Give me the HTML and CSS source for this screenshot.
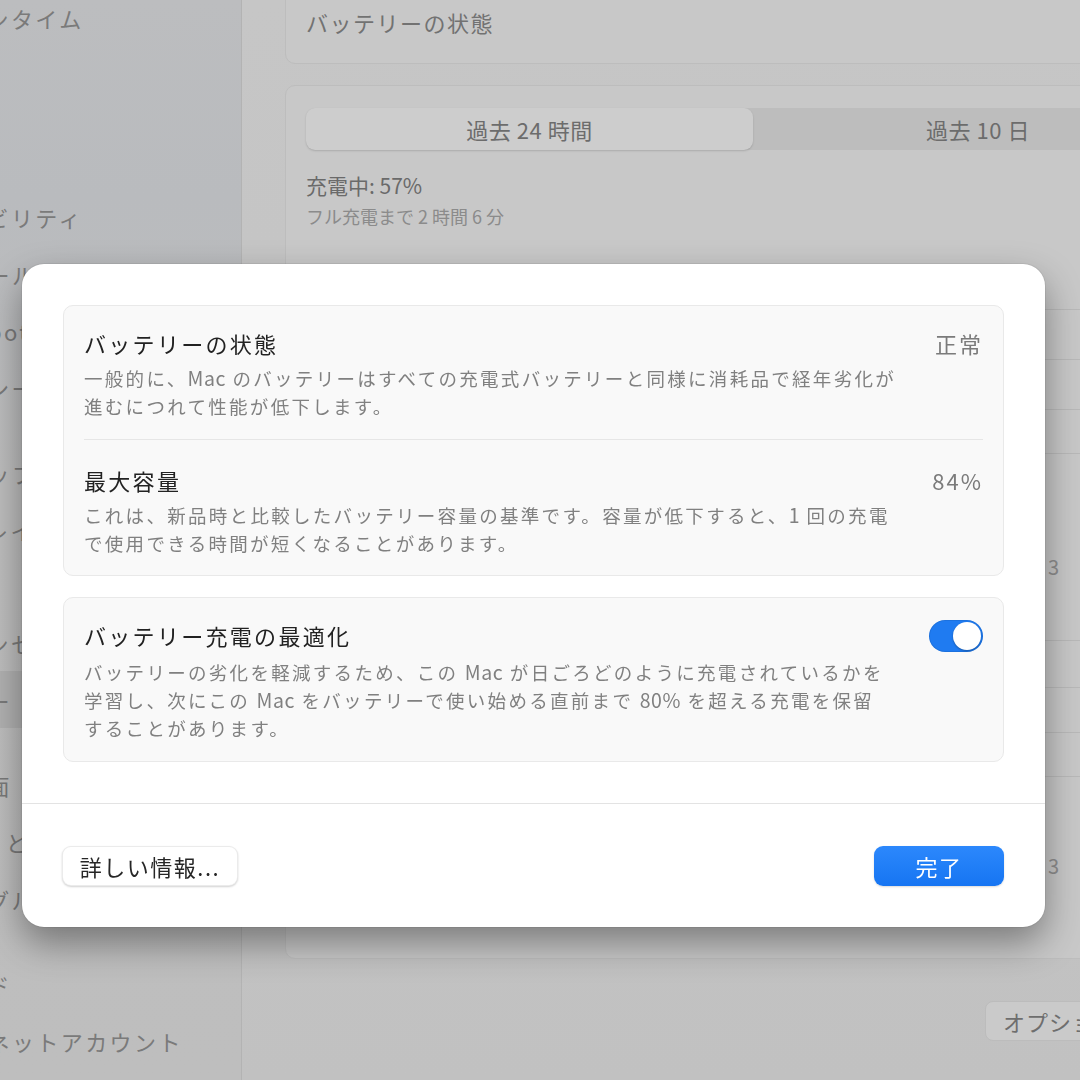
FILE: index.html
```html
<!DOCTYPE html>
<html lang="ja">
<head>
<meta charset="utf-8">
<title>バッテリー</title>
<link rel="stylesheet" href="styles.css">
</head>
<body>
<div class="app">
  <aside class="sidebar">
    <div class="side-list">
      <div class="group first">
        <div class="item">スクリーンタイム</div>
      </div>
      <div class="group">
        <div class="item">一般</div>
        <div class="item">外観</div>
        <div class="item">アクセシビリティ</div>
        <div class="item">コントロールセンター</div>
        <div class="item">Siri と Spotlight</div>
        <div class="item">プライバシーとセキュリティ</div>
      </div>
      <div class="group">
        <div class="item">デスクトップとDock</div>
        <div class="item">ディスプレイ</div>
        <div class="item">壁紙</div>
        <div class="item">スクリーンセーバ</div>
        <div class="item selected">バッテリー</div>
      </div>
      <div class="group">
        <div class="item">ロック画面</div>
        <div class="item">Touch ID とパスワード</div>
        <div class="item">ユーザとグループ</div>
      </div>
      <div class="group">
        <div class="item">パスワード</div>
        <div class="item">インターネットアカウント</div>
      </div>
    </div>
  </aside>
  <main class="content">
    <section class="bg-card top-card">
      <div class="bg-title">バッテリーの状態</div>
    </section>
    <section class="bg-card main-card">
      <div class="segmented">
        <div class="seg active">過去 24 時間</div>
        <div class="seg">過去 10 日</div>
      </div>
      <div class="status">充電中: 57%</div>
      <div class="status-sub">フル充電まで 2 時間 6 分</div>
      <div class="chart chart-one">
        <div class="gl gl-50"></div>
        <div class="gl gl-50"></div>
        <div class="gl gl-44"></div>
        <div class="gl gl-end"></div>
      </div>
      <div class="axis-label label-one">3</div>
      <div class="chart chart-two">
        <div class="gl gl-47"></div>
        <div class="gl gl-45"></div>
        <div class="gl gl-44"></div>
        <div class="gl gl-end"></div>
      </div>
      <div class="axis-label label-two">3</div>
    </section>
    <div class="options-row">
      <div class="bg-button">オプション...</div>
    </div>
  </main>
</div>

<div class="overlay">
  <div class="modal">
    <div class="modal-body">
      <div class="group-box">
        <div class="row">
          <div class="row-head">
            <div class="row-title">バッテリーの状態</div>
            <div class="row-value">正常</div>
          </div>
          <div class="row-desc">一般的に、<span class="latin">Mac</span> のバッテリーはすべての充電式バッテリーと同様に消耗品で経年劣化が<br>進むにつれて性能が低下します。</div>
        </div>
        <div class="divider"></div>
        <div class="row second">
          <div class="row-head">
            <div class="row-title">最大容量</div>
            <div class="row-value">84%</div>
          </div>
          <div class="row-desc">これは、新品時と比較したバッテリー容量の基準です。容量が低下すると、<span class="latin">1</span> 回の充電<br>で使用できる時間が短くなることがあります。</div>
        </div>
      </div>
      <div class="group-box">
        <div class="row">
          <div class="row-head">
            <div class="row-title">バッテリー充電の最適化</div>
            <div class="toggle on"><div class="knob"></div></div>
          </div>
          <div class="row-desc">バッテリーの劣化を軽減するため、この <span class="latin">Mac</span> が日ごろどのように充電されているかを<br>学習し、次にこの <span class="latin">Mac</span> をバッテリーで使い始める直前まで <span class="latin">80%</span> を超える充電を保留<br>することがあります。</div>
        </div>
      </div>
    </div>
    <div class="modal-footer">
      <button class="btn btn-secondary">詳しい情報...</button>
      <button class="btn btn-primary">完了</button>
    </div>
  </div>
</div>
</body>
</html>
```

FILE: styles.css
```css
* { box-sizing: border-box; }

html, body {
  margin: 0;
  padding: 0;
  width: 1080px;
  height: 1080px;
  overflow: hidden;
  background: #c4c4c4;
  font-family: "Noto Sans CJK JP", "Noto Sans", sans-serif;
}

.app {
  display: flex;
  width: 1300px;
  height: 1080px;
}

/* ---------- Sidebar (background) ---------- */
.sidebar {
  width: 242px;
  flex: none;
  height: 1080px;
  overflow: hidden;
  background: linear-gradient(180deg, #bcbdbf 0%, #b9bbbe 18%, #bdbdbd 45%, #bebebe 100%);
  border-right: 1px solid #b3b3b3;
}

.side-list {
  margin-left: -110px;
  width: 360px;
}

.group { margin-top: 29px; }
.group.first { margin-top: -10px; }

.item {
  height: 56.67px;
  display: flex;
  align-items: center;
  font-size: 22px;
  letter-spacing: 2.4px;
  color: #7a7a7a;
  white-space: nowrap;
  border-radius: 8px;
}

.item.selected {
  background: #b1b1b1;
}

/* ---------- Content (background) ---------- */
.content {
  flex: none;
  width: 1058px;
  padding-left: 43px;
  background: linear-gradient(180deg, #c6c6c6 0%, #c3c3c3 70%, #c1c1c1 100%);
}

.bg-card {
  width: 940px;
  background: #c8c8c8;
  border: 1px solid #bdbdbd;
  border-radius: 10px;
}

.top-card {
  margin-top: -20px;
  height: 84px;
  padding: 26px 20px 0;
}

.bg-title {
  font-size: 22px;
  letter-spacing: 1.5px;
  color: #727272;
  line-height: 30px;
}

.main-card {
  margin-top: 21px;
  height: 874px;
  padding: 22px 20px 0;
}

.segmented {
  display: flex;
  width: 897px;
  height: 42px;
  background: #bdbdbd;
  border-radius: 9px;
}

.seg {
  flex: 1;
  display: flex;
  align-items: center;
  justify-content: center;
  font-size: 22px;
  color: #6c6c6c;
  letter-spacing: 0.5px;
}

.seg.active {
  flex: none;
  width: 447px;
  background: #cdcdcd;
  border-radius: 9px;
  box-shadow: 0 1px 2px rgba(0, 0, 0, 0.15);
}

.status {
  margin-top: 20px;
  font-size: 21px;
  line-height: 30px;
  color: #6a6a6a;
}

.status-sub {
  margin-top: 3px;
  font-size: 18px;
  line-height: 26px;
  color: #8b8b8b;
}

.chart { width: 897px; }
.chart-one { margin-top: 80px; }
.chart-two { margin-top: 60px; }

.gl { border-top: 1px solid #b9b9b9; }
.gl-50 { height: 50px; }
.gl-47 { height: 47px; }
.gl-45 { height: 45px; }
.gl-44 { height: 44px; }
.gl-end { height: 0; }

.axis-label {
  margin-left: 742px;
  font-size: 20px;
  line-height: 26px;
  color: #8e8e8e;
}
.label-one { margin-top: 100px; }
.label-two { margin-top: 76px; }

.options-row {
  margin-top: 42px;
  padding-left: 700px;
}

.bg-button {
  display: inline-flex;
  align-items: center;
  height: 40px;
  padding: 0 17px;
  background: #cacaca;
  border: 1px solid #bcbcbc;
  border-radius: 8px;
  font-size: 22px;
  letter-spacing: 1px;
  color: #6e6e6e;
  white-space: nowrap;
}

/* ---------- Modal ---------- */
.overlay {
  position: fixed;
  left: 0;
  top: 0;
  width: 1080px;
  height: 1080px;
}

.modal {
  position: absolute;
  left: 22px;
  top: 264px;
  width: 1023px;
  height: 663px;
  background: #ffffff;
  border-radius: 22px;
  box-shadow: 0 0 0 1px rgba(0, 0, 0, 0.06), 0 16px 36px rgba(0, 0, 0, 0.38);
  display: flex;
  flex-direction: column;
}

.modal-body {
  padding: 41px 41px 41px;
  display: flex;
  flex-direction: column;
  gap: 21px;
}

.group-box {
  background: #f9f9f9;
  border: 1px solid #e9e9e9;
  border-radius: 10px;
  padding: 0 20px;
}

.row { padding: 22px 0 19px; }
.row.second { padding: 25px 0 18px; }

.row-head {
  display: flex;
  justify-content: space-between;
  align-items: flex-start;
}

.row-title {
  font-size: 22px;
  line-height: 30px;
  letter-spacing: 2.3px;
  color: #222222;
}

.row-value {
  font-size: 22px;
  line-height: 30px;
  letter-spacing: 2px;
  color: #7b7b7b;
}

.row-desc {
  margin-top: 6px;
  font-size: 18.5px;
  line-height: 28px;
  letter-spacing: 2.3px;
  color: #808080;
  white-space: nowrap;
}

.latin {
  letter-spacing: 0.6px;
  font-size: 19.5px;
}

.divider {
  height: 1px;
  background: #e6e6e6;
}

.toggle {
  width: 54px;
  height: 32px;
  border-radius: 16px;
  background: #1f7bf1;
  padding: 2px;
  display: flex;
  justify-content: flex-end;
  box-shadow: inset 0 0 0 1px rgba(0, 0, 0, 0.08);
}

.knob {
  width: 28px;
  height: 28px;
  border-radius: 50%;
  background: #ffffff;
  box-shadow: 0 1px 2px rgba(0, 0, 0, 0.3);
}

.modal-footer {
  margin-top: auto;
  border-top: 1px solid #e3e3e3;
  padding: 42px 41px 41px 40px;
  display: flex;
  justify-content: space-between;
  align-items: center;
}

.btn {
  height: 40px;
  border-radius: 9px;
  font-family: "Noto Sans CJK JP", "Noto Sans", sans-serif;
  font-size: 22px;
  letter-spacing: 1.5px;
  display: flex;
  align-items: center;
  justify-content: center;
  padding: 0;
}

.btn-secondary {
  width: 176px;
  background: #ffffff;
  color: #262626;
  border: 1px solid rgba(0, 0, 0, 0.08);
  box-shadow: 0 1px 2px rgba(0, 0, 0, 0.18);
}

.btn-primary {
  width: 130px;
  background: linear-gradient(180deg, #2c88fc 0%, #1675f2 100%);
  color: #ffffff;
  border: none;
  box-shadow: 0 1px 2px rgba(0, 0, 0, 0.15);
}
```
